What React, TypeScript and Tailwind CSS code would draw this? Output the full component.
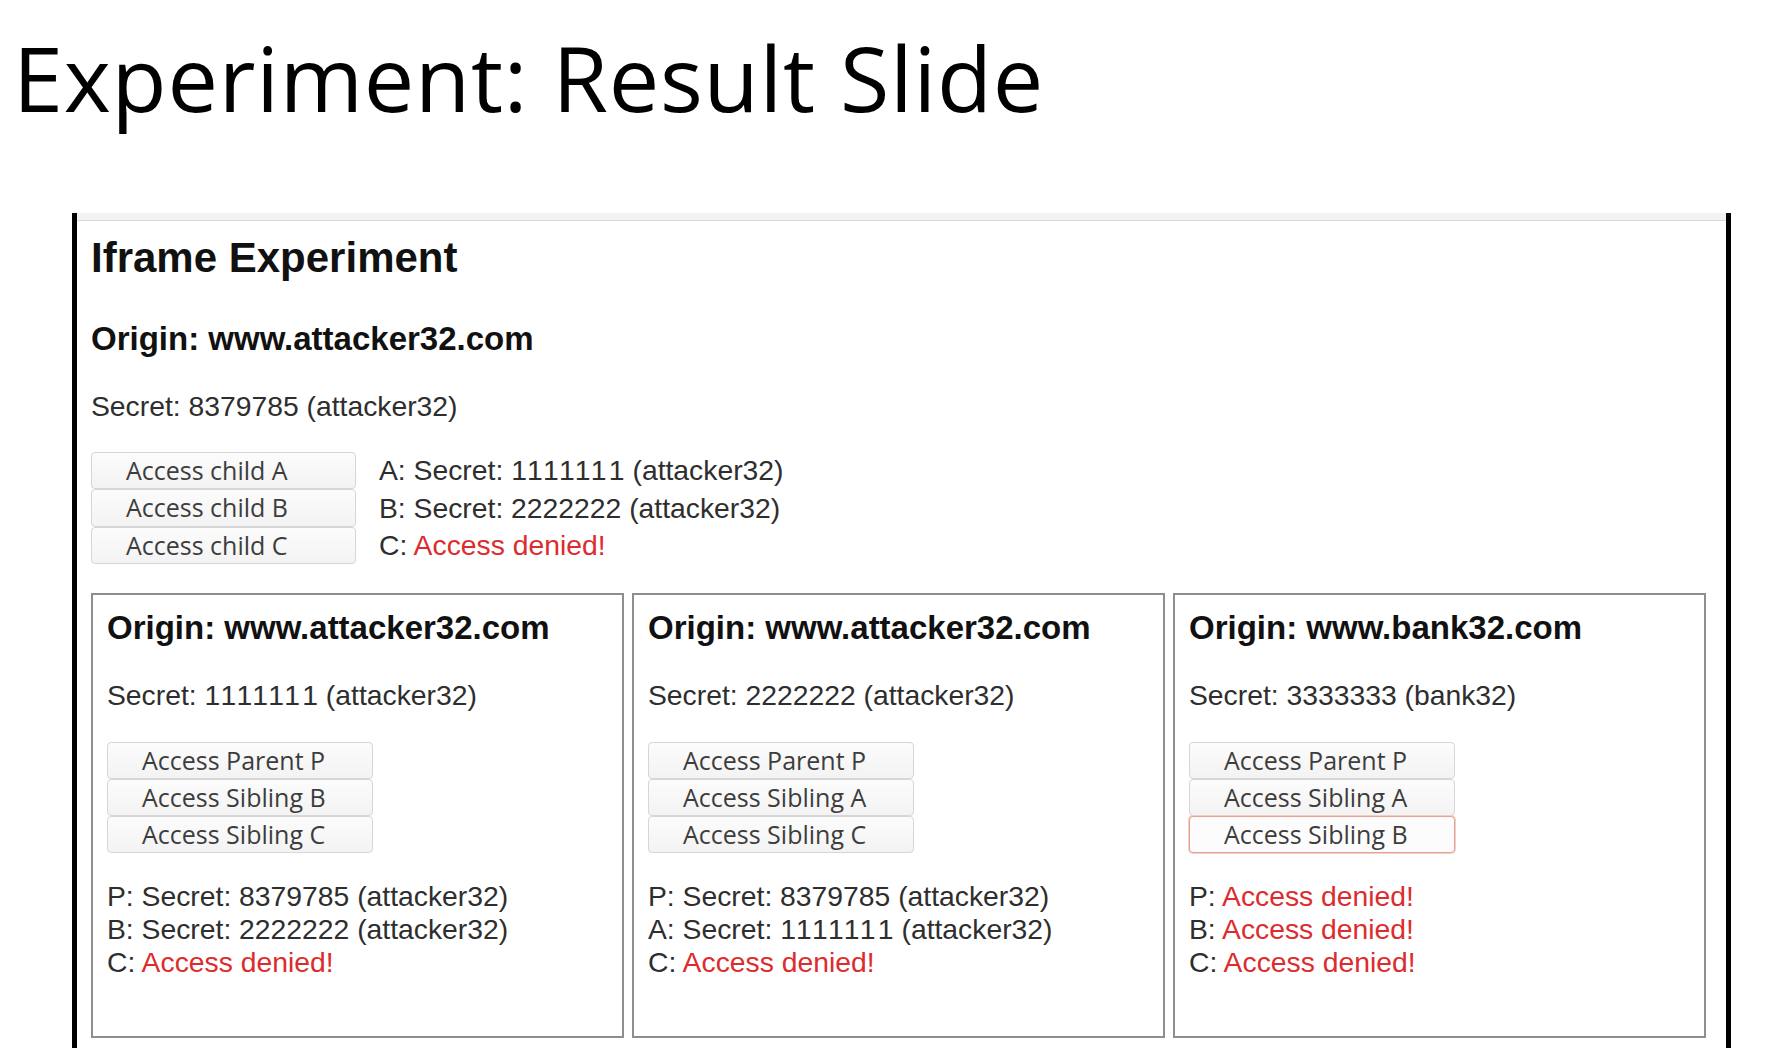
import React from 'react';

type Line = { label: string; text: string; denied?: boolean };

type Frame = {
  origin: string;
  secret: string;
  buttons: string[];
  focused?: number;
  lines: Line[];
};

const frames: Frame[] = [
  {
    origin: 'www.attacker32.com',
    secret: 'Secret: 1111111 (attacker32)',
    buttons: ['Access Parent P', 'Access Sibling B', 'Access Sibling C'],
    lines: [
      { label: 'P: ', text: 'Secret: 8379785 (attacker32)' },
      { label: 'B: ', text: 'Secret: 2222222 (attacker32)' },
      { label: 'C: ', text: 'Access denied!', denied: true },
    ],
  },
  {
    origin: 'www.attacker32.com',
    secret: 'Secret: 2222222 (attacker32)',
    buttons: ['Access Parent P', 'Access Sibling A', 'Access Sibling C'],
    lines: [
      { label: 'P: ', text: 'Secret: 8379785 (attacker32)' },
      { label: 'A: ', text: 'Secret: 1111111 (attacker32)' },
      { label: 'C: ', text: 'Access denied!', denied: true },
    ],
  },
  {
    origin: 'www.bank32.com',
    secret: 'Secret: 3333333 (bank32)',
    buttons: ['Access Parent P', 'Access Sibling A', 'Access Sibling B'],
    focused: 2,
    lines: [
      { label: 'P: ', text: 'Access denied!', denied: true },
      { label: 'B: ', text: 'Access denied!', denied: true },
      { label: 'C: ', text: 'Access denied!', denied: true },
    ],
  },
];

const topRows: Line[] = [
  { label: 'A: ', text: 'Secret: 1111111 (attacker32)' },
  { label: 'B: ', text: 'Secret: 2222222 (attacker32)' },
  { label: 'C: ', text: 'Access denied!', denied: true },
];

// the screenshot's font draws "1" as wide as the other digits
const Secret: React.FC<{ text: string }> = ({ text }) => {
  const parts = text.split(/(1111111)/);
  return (
    <>
      {parts.map((p, i) =>
        p === '1111111' ? (
          <React.Fragment key={i}>
            <span className="tracking-[2.3px]">111111</span>1
          </React.Fragment>
        ) : (
          <React.Fragment key={i}>{p}</React.Fragment>
        )
      )}
    </>
  );
};

const AccessButton: React.FC<{ label: string; focused?: boolean; className?: string }> = ({ label, focused, className }) => (
  <button
    className={
      'block text-left pl-[34px] rounded-[4px] border font-["Open_Sans",sans-serif] text-[25px] leading-none text-[#3d3d3d] ' +
      (focused
        ? 'border-[#e6a294] bg-[#fdfcfc] shadow-[0_0_0_1px_#f1cfc7] '
        : 'border-[#d6d6d6] bg-gradient-to-b from-[#fcfcfc] to-[#f3f3f3] ') +
      (className ?? '')
    }
  >
    {label}
  </button>
);

const Result: React.FC<{ line: Line }> = ({ line }) => (
  <>
    {line.label}
    <span className={line.denied ? 'text-[#dc2c2e]' : ''}>
      <Secret text={line.text} />
    </span>
  </>
);

const FrameBox: React.FC<{ frame: Frame }> = ({ frame }) => (
  <div className="w-[533px] h-[445px] border-2 border-[#8e8e8e] px-[14px] pt-[14px]">
    <h3 className="text-[33px] leading-[38px] font-bold text-[#111]">Origin: {frame.origin}</h3>
    <p className="mt-[32px] text-[28.3px] leading-[32px]">
      <Secret text={frame.secret} />
    </p>
    <div className="mt-[31px] flex flex-col w-[266px]">
      {frame.buttons.map((b, i) => (
        <AccessButton key={b} label={b} focused={frame.focused === i} className="h-[37.3px]" />
      ))}
    </div>
    <div className="mt-[27px] text-[28.3px] leading-[33px]">
      {frame.lines.map((l) => (
        <div key={l.label}>
          <Result line={l} />
        </div>
      ))}
    </div>
  </div>
);

export default function App() {
  return (
    <div className="w-[1778px] h-[1048px] overflow-hidden bg-white">
      <h1 className="pl-[13px] pt-[27px] text-[90px] leading-[100px] tracking-[0.75px] text-black font-['Open_Sans',sans-serif]">
        Experiment: Result Slide
      </h1>

      {/* browser screenshot */}
      <div className="ml-[72px] mt-[86px] w-[1659px] h-[835px] border-x-[5px] border-black flex flex-col font-['Liberation_Sans',Arial,sans-serif] text-[#2e2e2e]">
        <div className="h-[8px] shrink-0 bg-[#f2f2f2] border-b border-[#d9d9d9]" />
        <div className="pl-[14px]">
          <h1 className="mt-[13px] text-[42px] leading-[48px] font-bold text-[#111]">Iframe Experiment</h1>
          <h3 className="mt-[37.5px] text-[33px] leading-[38px] font-bold text-[#111]">Origin: www.attacker32.com</h3>
          <p className="mt-[32.5px] text-[28.3px] leading-[32px]">Secret: 8379785 (attacker32)</p>

          <div className="mt-[29.5px] grid grid-cols-[265px_auto] gap-x-[23px] justify-start">
            {['Access child A', 'Access child B', 'Access child C'].map((b, i) => (
              <React.Fragment key={b}>
                <AccessButton label={b} className="h-[37.5px] w-full" />
                <div className="h-[37.5px] flex items-center text-[28.3px] leading-none">
                  <span>
                    <Result line={topRows[i]} />
                  </span>
                </div>
              </React.Fragment>
            ))}
          </div>

          <div className="mt-[28.5px] flex gap-[8px]">
            {frames.map((f, i) => (
              <FrameBox key={i} frame={f} />
            ))}
          </div>
        </div>
      </div>
    </div>
  );
}
